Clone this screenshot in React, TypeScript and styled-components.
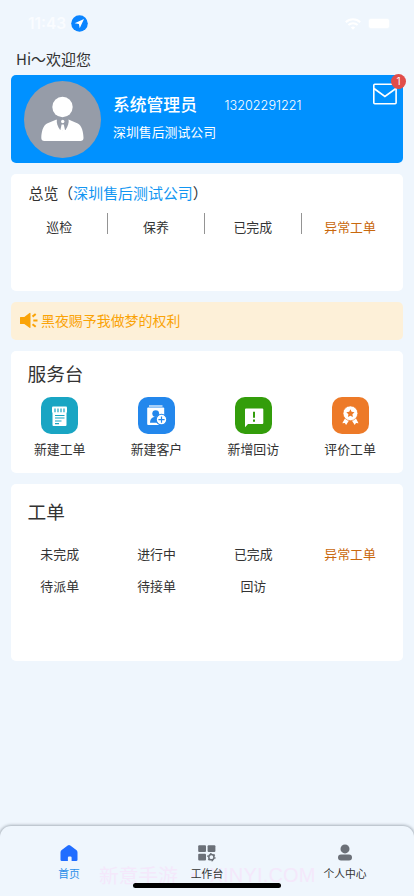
import React from 'react';
import styled, { createGlobalStyle } from 'styled-components';

const Global = createGlobalStyle`
  * { box-sizing: border-box; }
  html, body { margin: 0; padding: 0; background: #eff6fd; }
  body {
    font-family: "Noto Sans CJK SC", sans-serif;
    color: #333;
    overflow: hidden;
  }
  svg { display: block; }
`;

const Screen = styled.div`
  width: 414px;
  height: 896px;
  display: flex;
  flex-direction: column;
  background: #eff6fd;
  overflow: hidden;
`;

const StatusBar = styled.header`
  height: 46px;
  padding: 1px 25px 0 28px;
  display: flex;
  align-items: center;
  justify-content: space-between;
  color: #fafcff;
`;

const StatusGroup = styled.div<{ $gap: number }>`
  display: flex;
  align-items: center;
  gap: ${(p) => p.$gap}px;
`;

const Clock = styled.span`
  width: 40px;
  font: 600 15.5px/20px Inter, sans-serif;
  white-space: nowrap;
`;

const Battery = styled.span`
  width: 20px;
  height: 9px;
  border-radius: 2px;
  background: #fff;
  box-shadow: 0 0 2px #fff;
`;

const Greeting = styled.h1`
  margin: 0;
  height: 29px;
  padding: 0 16px;
  font-size: 15px;
  font-weight: 400;
  line-height: 26px;
`;

const Content = styled.main`
  flex: 1;
  padding: 0 11px;
  display: flex;
  flex-direction: column;
  gap: 11px;
`;

const Card = styled.section<{ $height: number }>`
  height: ${(p) => p.$height}px;
  border-radius: 5px;
  background: #fff;
`;

const ProfileCard = styled.section`
  position: relative;
  height: 88px;
  border-radius: 5px;
  background: #0091ff;
  color: #fff;
  display: flex;
  padding: 6px 0 0 12.5px;
`;

const Avatar = styled.div`
  width: 77px;
  height: 77px;
  border-radius: 50%;
  background: #969ca8;
`;

const ProfileInfo = styled.div`
  padding: 11px 0 0 12.5px;
`;

const NameRow = styled.div`
  display: flex;
  align-items: center;
  height: 24px;
`;

const Name = styled.strong`
  width: 111.5px;
  font-size: 16.8px;
  font-weight: 500;
  line-height: 24px;
`;

const Phone = styled.span`
  font: 300 12.700px/20px Inter, sans-serif;
  padding-top: 3px;
`;

const Company = styled.div`
  margin-top: 6px;
  font-size: 12.9px;
  line-height: 20px;
`;

const Mail = styled.div`
  position: absolute;
  right: 6.5px;
  top: 8px;
`;

const Badge = styled.span`
  position: absolute;
  right: -9.5px;
  top: -9.5px;
  width: 15px;
  height: 15px;
  border-radius: 50%;
  background: #e14d4a;
  font: 400 10px/15px Inter, sans-serif;
  text-align: center;
`;

const OverviewTitle = styled.h2`
  margin: 0;
  padding: 7px 0 0 17.5px;
  font-size: 14.95px;
  font-weight: 400;
  line-height: 24px;
`;

const Accent = styled.span`
  color: #1296f2;
`;

const Grid = styled.div<{ $top: number }>`
  display: grid;
  grid-template-columns: repeat(4, 96.8px);
  padding-top: ${(p) => p.$top}px;
  margin-left: 0.3px;
`;

const Cell = styled.div<{ $height: number; $warn?: boolean }>`
  height: ${(p) => p.$height}px;
  display: flex;
  align-items: center;
  justify-content: center;
  font-size: 12.9px;
  line-height: 20px;
  color: ${(p) => (p.$warn ? '#c9680c' : '#333')};
`;

const OverviewCell = styled(Cell)`
  padding-top: 7px;
  &:not(:last-child) {
    border-right: 1px solid #949494;
  }
`;

const Notice = styled.section`
  height: 38px;
  border-radius: 5px;
  background: #fdf0d8;
  color: #faa307;
  display: flex;
  align-items: center;
  padding: 0 0 1px 9px;
  gap: 3px;
  font-size: 13.95px;
  line-height: 20px;
`;

const NoticeText = styled.span`
  padding-bottom: 2px;
`;

const SectionTitle = styled.h2<{ $top: number }>`
  margin: 0;
  padding: ${(p) => p.$top}px 0 0 16.5px;
  font-size: 18.7px;
  font-weight: 400;
  line-height: 28px;
`;

const Service = styled.div`
  display: flex;
  flex-direction: column;
  align-items: center;
  font-size: 12.9px;
  line-height: 20px;
  gap: 5px;
`;

const IconTile = styled.div<{ $color: string }>`
  width: 37px;
  height: 37px;
  border-radius: 10px;
  background: ${(p) => p.$color};
`;

const TabBar = styled.nav`
  position: relative;
  height: 70px;
  border-radius: 11px 11px 0 0;
  background: #eff6fd;
  box-shadow: 0 0 3px 1px rgba(80, 90, 105, 0.45);
  display: grid;
  grid-template-columns: repeat(3, 1fr);
  padding-top: 17px;
`;

const Tab = styled.div<{ $active?: boolean }>`
  position: relative;
  display: flex;
  flex-direction: column;
  align-items: center;
  gap: 1px;
  font-size: 10.8px;
  line-height: 18px;
  color: ${(p) => (p.$active ? '#2b8fe9' : '#333')};
`;

const Watermark = styled.div`
  position: absolute;
  left: 99px;
  top: 36px;
  display: flex;
  gap: 6px;
  font: 400 19.7px/26px "Noto Sans CJK SC", sans-serif;
  color: #f4e8fb;
  white-space: pre;
`;

const WatermarkSite = styled.span`
  font: 400 20px/26px "Liberation Sans", sans-serif;
  letter-spacing: 0.2px;
`;

const HomeIndicator = styled.div`
  position: absolute;
  left: 133px;
  bottom: 8px;
  width: 148px;
  height: 5px;
  border-radius: 3px;
  background: #000;
`;

const LocationIcon = () => (
  <svg width="17" height="17" viewBox="0 0 17 17">
    <circle cx="8.5" cy="8.5" r="8.3" fill="#0a84ff" />
    <path d="M13 4 3.6 8.2l4.3.8.8 4.3z" fill="#fff" />
  </svg>
);

const WifiIcon = () => (
  <svg width="16" height="12" viewBox="0 0 16 12" fill="none" stroke="#fff" strokeWidth="2">
    <path d="M.8 4.2a10.3 10.3 0 0 1 14.4 0M3.4 7a6.6 6.6 0 0 1 9.2 0" />
    <path d="M8 11.8 5.8 9.5a3.2 3.2 0 0 1 4.4 0z" fill="#fff" stroke="none" />
  </svg>
);

const PersonIcon = () => (
  <svg width="77" height="77" viewBox="0 0 77 77">
    <circle cx="38.5" cy="26" r="10.2" fill="#fff" />
    <path
      d="M32.5 38.5 23 42.5c-4 1.8-5.700 9-5.700 14.500 0 2 1.200 3 3 3h36.200c1.800 0 3-1 3-3 0-5.500-1.700-12.700-5.700-14.500l-9.300-4-6.100 11z"
      fill="#fff"
    />
    <path d="M33 38.500h11.500c.7 3-.6 7-3 10.500h-5.400c-2.600-3.500-3.900-7.500-3.100-10.500z" fill="#969ca8" />
    <circle cx="38.700" cy="40.500" r="1.700" fill="#fff" />
    <path d="m37.600 43.400-1.300 6h4.800l-1.300-6z" fill="#fff" />
  </svg>
);

const MailIcon = () => (
  <svg width="24" height="22" viewBox="0 0 24 22" fill="none" stroke="#fff" strokeWidth="1.600">
    <rect x=".8" y="1.200" width="22.300" height="19.500" rx="1" />
    <path d="m1 5.500 10.900 8L22.900 5.500" />
  </svg>
);

const SpeakerIcon = () => (
  <svg width="18" height="17" viewBox="0 0 18 17" fill="#faa307">
    <path d="M.5 5h3.800L9.500 1q1-.7 1 .5v13.800q0 1.100-1 .4L4.300 12H.5Q0 12 0 11.500v-6Q0 5 .5 5z" />
    <path d="m12.500 4.600 3.200-2.600M13.300 8.400h4.200M12.500 12.200l3.200 2.600" stroke="#faa307" strokeWidth="2" />
  </svg>
);

const TicketIcon = () => (
  <svg width="37" height="37" viewBox="0 0 37 37">
    <path d="M11 10.500q0-1 1-1h13q1 0 1 1v5H11z" fill="#fff" />
    <path d="M11.500 14h14v14q0 1-1 1h-12q-1 0-1-1z" fill="#fff" />
    <path d="M14 11.500v3.700M17 11.500v3.700M20 11.500v3.700M23 11.500v3.700" stroke="#19a5c3" strokeWidth="1.200" />
    <path d="M14 18.500h9.500M14 21h9.500M14 24h6.500M14 26.700h4" stroke="#19a5c3" strokeWidth="1.200" />
  </svg>
);

const CustomerIcon = () => (
  <svg width="37" height="37" viewBox="0 0 37 37">
    <path d="M11 9h13.500" stroke="#fff" strokeWidth="1.200" />
    <rect x="9.200" y="10.600" width="17" height="17.400" rx="1" fill="#fff" />
    <circle cx="17.700" cy="16.600" r="3.400" fill="#2387ec" />
    <path d="M12 25.800c.1-3.800 2-5.800 5.700-5.800 3 0 5.300 2 5.300 5.800z" fill="#2387ec" />
    <circle cx="23.500" cy="22.600" r="5.300" fill="#fff" stroke="#2387ec" strokeWidth="1.100" />
    <path d="M20.400 22.600h6.200M23.500 19.500v6.200" stroke="#2387ec" strokeWidth="1.200" />
  </svg>
);

const VisitIcon = () => (
  <svg width="37" height="37" viewBox="0 0 37 37">
    <path d="M11 11.500h16.300q1 0 1 1v13.500q0 1-1 1H13l-3 3.200V12.500q0-1 1-1z" fill="#fff" />
    <path d="M19 14.700v6M19 22.600v2.200" stroke="#339d0b" strokeWidth="2" />
  </svg>
);

const AwardIcon = () => (
  <svg width="37" height="37" viewBox="0 0 37 37">
    <path d="m13.500 20.500-3.200 5.700 2.500-.2 1.300 2.100 3.500-5.600zM23.500 20.500l3 5.700-2.500-.2-1.300 2.100-3.500-5.600z" fill="#fff" />
    <circle cx="18.400" cy="16.300" r="7.400" fill="#fff" stroke="#ed7a28" strokeWidth=".7" />
    <path d="m18.400 12.200 1.200 2.600 2.900.4-2.100 2 .5 2.800-2.500-1.300-2.500 1.300.5-2.800-2.100-2 2.900-.4z" fill="#ed7a28" />
  </svg>
);

const HomeIcon = () => (
  <svg width="20" height="20" viewBox="0 0 20 20">
    <path
      d="M8.700 2.400q1.300-.9 2.600 0l6 4.700q1.200.9 1.200 2.400v7.200q0 1.300-1.300 1.300h-4.600v-3.400q0-1.100-1.100-1.100H10q-1.100 0-1.100 1.100V18H2.800q-1.300 0-1.300-1.300V9.500Q1.500 8 2.700 7.100z"
      fill="#216dff"
    />
  </svg>
);

const WorkbenchIcon = () => (
  <svg width="20" height="20" viewBox="0 0 20 20" fill="#6b7078">
    <rect x="1.200" y="2.300" width="7.800" height="6.800" rx="1" />
    <rect x="10.600" y="2.300" width="7.800" height="6.800" rx="1" />
    <rect x="1.200" y="10.700" width="7.800" height="6.900" rx="1" />
    <circle cx="14.400" cy="14.200" r="2.600" fill="none" stroke="#6b7078" strokeWidth="1.500" />
    <circle cx="14.400" cy="14.200" r="3.600" fill="none" stroke="#6b7078" strokeWidth="1.200" strokeDasharray="1.600 2.170" />
  </svg>
);

const UserIcon = () => (
  <svg width="20" height="20" viewBox="0 0 20 20" fill="#6b7078">
    <circle cx="10" cy="5.900" r="4.500" />
    <rect x="3" y="11.500" width="14" height="6" rx="3" />
  </svg>
);

const overview = ['巡检', '保养', '已完成', '异常工单'];
const orders = ['未完成', '进行中', '已完成', '异常工单', '待派单', '待接单', '回访'];
const services = [
  { label: '新建工单', color: '#19a5c3', Icon: TicketIcon },
  { label: '新建客户', color: '#2387ec', Icon: CustomerIcon },
  { label: '新增回访', color: '#339d0b', Icon: VisitIcon },
  { label: '评价工单', color: '#ed7a28', Icon: AwardIcon },
];
const tabs = [
  { label: '首页', Icon: HomeIcon },
  { label: '工作台', Icon: WorkbenchIcon },
  { label: '个人中心', Icon: UserIcon },
];

export default function App() {
  return (
    <>
      <Global />
      <Screen>
        <StatusBar>
          <StatusGroup $gap={3}>
            <Clock>11:43</Clock>
            <LocationIcon />
          </StatusGroup>
          <StatusGroup $gap={8}>
            <WifiIcon />
            <Battery />
          </StatusGroup>
        </StatusBar>
        <Greeting>Hi～欢迎您</Greeting>
        <Content>
          <ProfileCard>
            <Avatar>
              <PersonIcon />
            </Avatar>
            <ProfileInfo>
              <NameRow>
                <Name>系统管理员</Name>
                <Phone>13202291221</Phone>
              </NameRow>
              <Company>深圳售后测试公司</Company>
            </ProfileInfo>
            <Mail>
              <MailIcon />
              <Badge>1</Badge>
            </Mail>
          </ProfileCard>
          <Card $height={117}>
            <OverviewTitle>
              总览（<Accent>深圳售后测试公司</Accent>）
            </OverviewTitle>
            <Grid $top={8}>
              {overview.map((label) => (
                <OverviewCell key={label} $height={21} $warn={label === '异常工单'}>
                  {label}
                </OverviewCell>
              ))}
            </Grid>
          </Card>
          <Notice>
            <SpeakerIcon />
            <NoticeText>黑夜赐予我做梦的权利</NoticeText>
          </Notice>
          <Card $height={122}>
            <SectionTitle $top={8}>服务台</SectionTitle>
            <Grid $top={10}>
              {services.map(({ label, color, Icon }) => (
                <Service key={label}>
                  <IconTile $color={color}>
                    <Icon />
                  </IconTile>
                  <span>{label}</span>
                </Service>
              ))}
            </Grid>
          </Card>
          <Card $height={177}>
            <SectionTitle $top={13}>工单</SectionTitle>
            <Grid $top={13}>
              {orders.map((label) => (
                <Cell key={label} $height={32} $warn={label === '异常工单'}>
                  {label}
                </Cell>
              ))}
            </Grid>
          </Card>
        </Content>
        <TabBar>
          <Watermark>
            <span>新意手游</span>
            <span>·</span>
            <WatermarkSite>XINYI.COM</WatermarkSite>
          </Watermark>
          {tabs.map(({ label, Icon }, i) => (
            <Tab key={label} $active={i === 0}>
              <Icon />
              <span>{label}</span>
            </Tab>
          ))}
          <HomeIndicator />
        </TabBar>
      </Screen>
    </>
  );
}
